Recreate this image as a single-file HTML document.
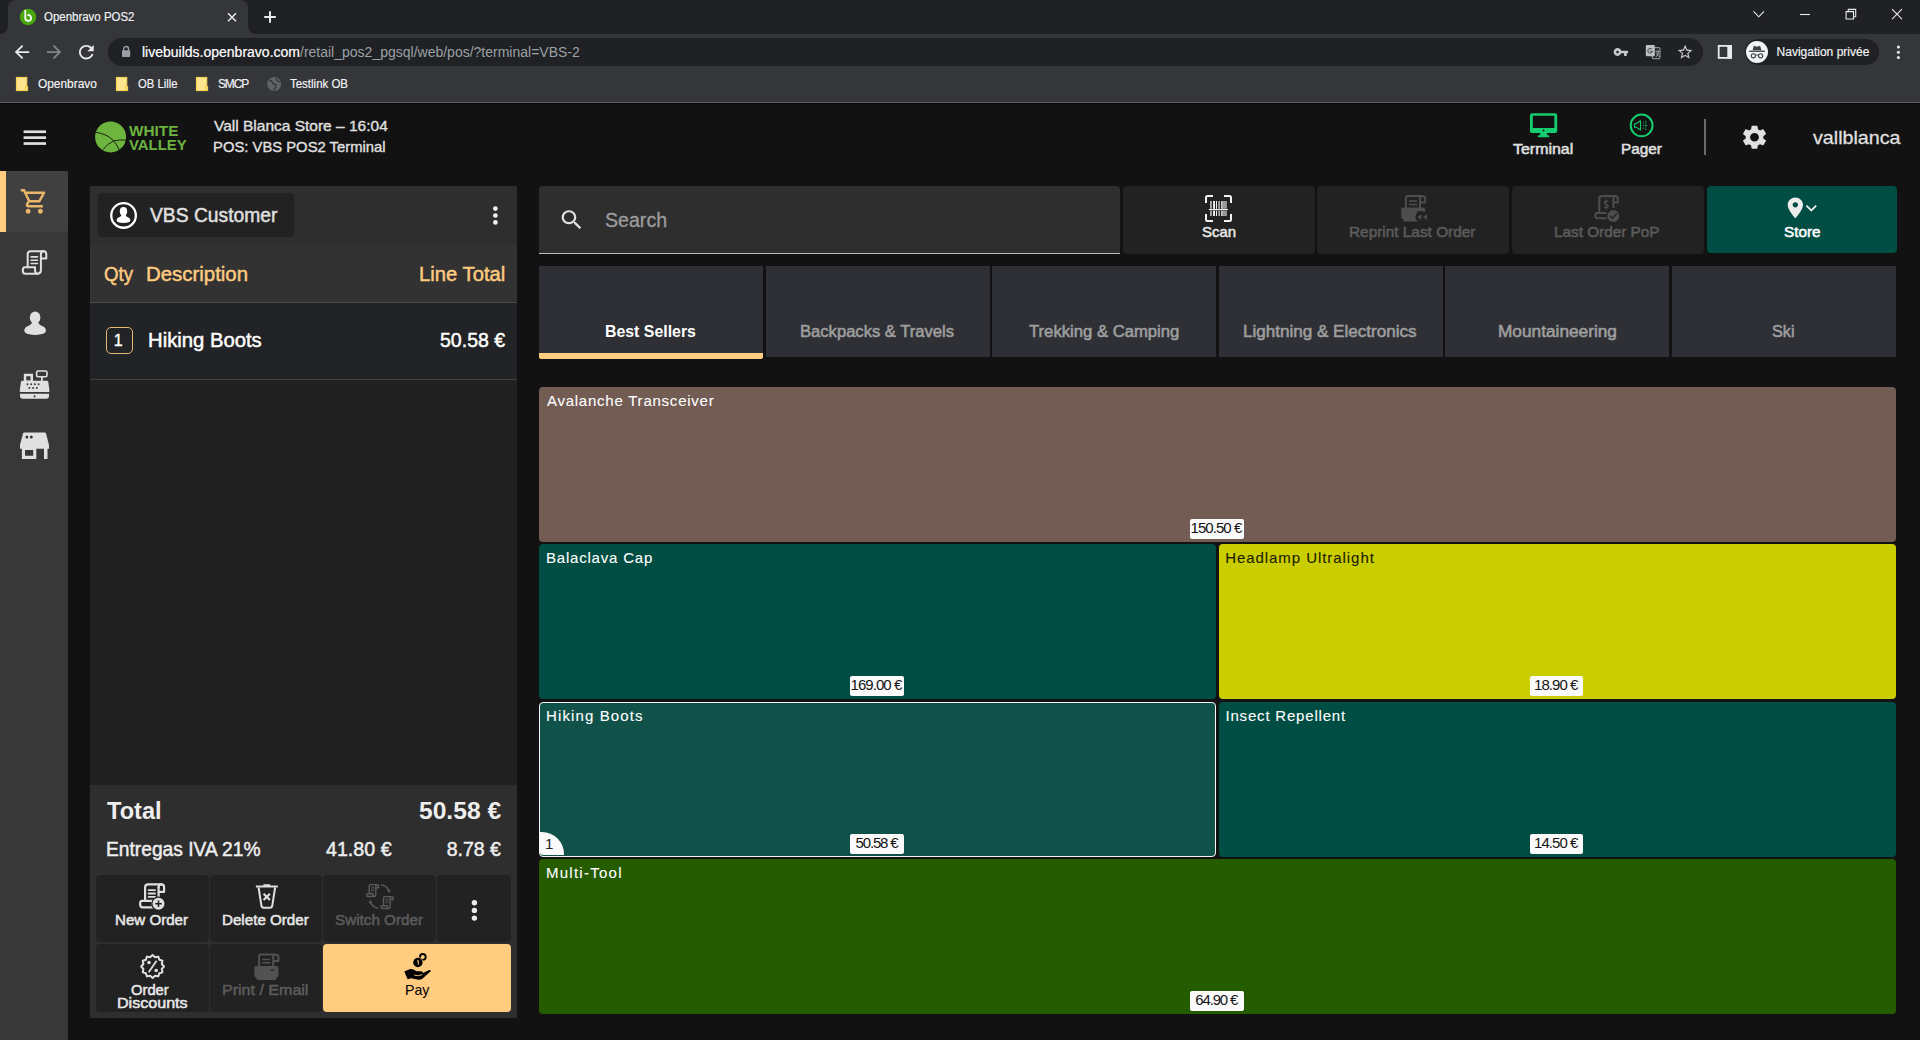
<!DOCTYPE html>
<html lang="en">
<head>
<meta charset="utf-8">
<title>Openbravo POS2</title>
<style>
*{box-sizing:border-box;margin:0;padding:0}
html,body{width:1920px;height:1040px;overflow:hidden;background:#121212;font-family:"Liberation Sans",sans-serif;color:#fff}
#root{position:relative;width:1920px;height:1040px;overflow:hidden;background:#121212}
.abs,#root>div,#root>span,#root>svg{position:absolute}
.t{white-space:nowrap;transform-origin:0 0;display:block}
svg{display:block;overflow:visible}
/* browser chrome */
#tabstrip{left:0;top:0;width:1920px;height:34px;background:#202124}
#tab{left:8px;top:0;width:240px;height:34px;background:#35363a;border-radius:8px 8px 0 0}
#toolbar{left:0;top:34px;width:1920px;height:34px;background:#35363a}
#omni{left:108px;top:38px;width:1595px;height:28px;border-radius:14px;background:#202124}
#incog{left:1745px;top:39px;width:134px;height:26px;border-radius:13px;background:#202124}
#incogav{left:1746px;top:41px;width:22px;height:22px;border-radius:11px;background:#f1f3f4}
#bookmarks{left:0;top:68px;width:1920px;height:34px;background:#35363a}
#chromeline{left:0;top:102px;width:1920px;height:1px;background:#5e5f62;box-shadow:0 1px 0 #0c0c0c}
/* app */
#sidebar{left:0;top:171px;width:68px;height:869px;background:#383838}
#sideactive{left:0;top:171px;width:68px;height:61px;background:#404040;border-radius:0 4px 4px 0}
#sidebarmark{left:0;top:171px;width:6px;height:61px;background:#ffcc80}
#hsep{left:1704px;top:119px;width:2px;height:36px;background:#6a6a6a}
#ticket{left:90px;top:186px;width:427px;height:832px;background:#212121}
#tickethead{left:90px;top:186px;width:427px;height:59px;background:#2e2e2e}
#custbtn{left:98px;top:193px;width:196px;height:44px;background:#222222;border-radius:4px}
#colhead{left:90px;top:245px;width:427px;height:58px;background:#323232;border-bottom:1px solid #4a4a4a}
#line1{left:90px;top:303px;width:427px;height:77px;background:#222326;border-bottom:1px solid #424242}
#qtybox{left:106px;top:327px;width:27px;height:27px;border:1px solid #e6b873;border-radius:5px}
#totals{left:90px;top:785px;width:427px;height:233px;background:#2e2e2e}
.btn{background:#222222;border-radius:4px}
#pay{left:323.25px;top:944.25px;width:187.75px;height:67.5px;background:#ffcc80;border-radius:4px}
/* right */
#search{left:539px;top:186px;width:581px;height:68px;background:#2e2e2e;border-radius:4px 4px 0 0;border-bottom:1px solid #bdbdbd}
#store{left:1706.700px;top:186.400px;width:190.700px;height:67px;background:#004d43;border-radius:4px}
.cat{top:266px;width:224px;height:91px;background:#2f3036}
#cat0{height:87px}
#catbar{left:539px;top:353px;width:224px;height:6px;background:#ffcc80;border-radius:0 0 2px 2px}
.prod{border-radius:4px}
.price{width:54px;height:20px;background:#fafafa;border-radius:2px}
#qtybadge{left:540px;top:832px;width:24px;height:23px;background:#fafafa;border-radius:0 22px 0 3px}
</style>
</head>
<body>
<div id="root">
<!-- browser chrome -->
<div id="tabstrip"></div>
<div id="tab"></div>
<div id="toolbar"></div>
<div id="omni"></div>
<div id="incog"></div>
<div id="incogav"></div>
<div id="bookmarks"></div>
<div id="chromeline"></div>
<!-- app shell -->
<div id="sidebar"></div>
<div id="sideactive"></div>
<div id="sidebarmark"></div>
<div id="hsep"></div>
<!-- ticket -->
<div id="ticket"></div>
<div id="tickethead"></div>
<div id="custbtn"></div>
<div id="colhead"></div>
<div id="line1"></div>
<div id="qtybox"></div>
<div id="totals"></div>
<div class="btn" style="left:96.25px;top:874.5px;width:112.5px;height:67.5px"></div>
<div class="btn" style="left:210px;top:874.5px;width:112px;height:67.5px"></div>
<div class="btn" style="left:323.25px;top:874.5px;width:112.5px;height:67.5px"></div>
<div class="btn" style="left:437px;top:874.5px;width:74px;height:67.5px"></div>
<div class="btn" style="left:96.25px;top:944.25px;width:112.5px;height:67.5px"></div>
<div class="btn" style="left:210px;top:944.25px;width:112px;height:67.5px"></div>
<div id="pay"></div>
<!-- right: search + actions -->
<div id="search"></div>
<div class="btn" style="left:1123px;top:186px;width:192px;height:68px"></div>
<div class="btn" style="left:1317px;top:186px;width:192px;height:68px"></div>
<div class="btn" style="left:1512px;top:186px;width:192px;height:68px"></div>
<div id="store"></div>
<!-- categories -->
<div class="cat" id="cat0" style="left:539px"></div>
<div class="cat" style="left:766px"></div>
<div class="cat" style="left:992.3px"></div>
<div class="cat" style="left:1218.8px"></div>
<div class="cat" style="left:1445.4px"></div>
<div class="cat" style="left:1672px"></div>
<div id="catbar"></div>
<!-- products -->
<div class="prod" style="left:539px;top:387px;width:1357px;height:155px;background:#735c54"></div>
<div class="prod" style="left:539px;top:544px;width:677px;height:155px;background:#004d43"></div>
<div class="prod" style="left:1219px;top:544px;width:677px;height:155px;background:#cacd00"></div>
<div class="prod" style="left:539px;top:702px;width:677px;height:155px;background:#10524a;border:1px solid #f5f5f5"></div>
<div class="prod" style="left:1219px;top:702px;width:677px;height:155px;background:#004d43"></div>
<div class="prod" style="left:539px;top:859px;width:1357px;height:155px;background:#265c00"></div>
<div class="price" style="left:1190px;top:519px"></div>
<div class="price" style="left:850px;top:676px"></div>
<div class="price" style="left:1530px;top:676px;width:53px"></div>
<div class="price" style="left:850px;top:834px"></div>
<div class="price" style="left:1530px;top:834px;width:53px"></div>
<div class="price" style="left:1190px;top:991px"></div>
<div id="qtybadge"></div>

<!-- icons -->
<svg class="abs" style="left:0;top:0" width="1920" height="1040" viewBox="0 0 1920 1040">
<path d="M0 34 A8 8 0 0 0 8 26 V34Z M248 26 A8 8 0 0 0 256 34 H248Z" fill="#35363a"/>
<circle cx="28" cy="17" r="8.2" fill="#46a80c"/>
<path d="M25.3 10.6 V17.9 A2.9 2.9 0 1 0 28.2 15" fill="none" stroke="#fff" stroke-width="1.8" stroke-linecap="round"/>
<path d="M228 13.2 L236 21.2 M236 13.2 L228 21.2" stroke="#e8eaed" stroke-width="1.5" fill="none"/>
<path d="M264.2 17 H275.8 M270 11.2 V22.8" stroke="#e8eaed" stroke-width="2" fill="none"/>
<g transform="translate(11.200 41.500) scale(0.9000 0.8750)" fill="#e8eaed" ><path d="M20 11H7.83l5.59-5.59L12 4l-8 8 8 8 1.41-1.41L7.83 13H20v-2z"/></g>
<g transform="translate(43.438 41.500) scale(0.8906 0.8750)" fill="#84868a" ><path d="M12 4l-1.41 1.41L16.17 11H4v2h12.17l-5.58 5.59L12 20l8-8z"/></g>
<g transform="translate(75.325 41.400) scale(0.9188 0.9000)" fill="#e8eaed" ><path d="M17.65 6.35C16.2 4.9 14.21 4 12 4c-4.42 0-7.99 3.58-7.99 8s3.57 8 7.99 8c3.73 0 6.84-2.55 7.73-6h-2.08c-.82 2.33-3.04 4-5.65 4-3.31 0-6-2.69-6-6s2.690-6 6-6c1.660 0 3.140.69 4.220 1.78L13 11h7V4l-2.350 2.350z"/></g>
<rect x="122" y="50.3" width="8.2" height="6.8" rx="0.8" fill="#9aa0a6"/>
<path d="M123.7 50.6 V48.9 A2.4 2.4 0 0 1 128.5 48.9 V50.6" fill="none" stroke="#9aa0a6" stroke-width="1.4"/>
<g transform="translate(1612.945 44.200) scale(0.6545 0.6500)" fill="#c7c9cc" ><path d="M12.65 10C11.83 7.67 9.61 6 7 6c-3.31 0-6 2.69-6 6s2.69 6 6 6c2.61 0 4.83-1.67 5.65-4H17v4h4v-4h2v-4H12.65zM7 14c-1.1 0-2-.9-2-2s.9-2 2-2 2 .9 2 2-.9 2-2 2z"/></g>
<rect x="1652.300" y="47.700" width="7.700" height="11" rx="0.800" fill="#26272b" stroke="#b4b7bb" stroke-width="0.900"/>
<rect x="1645.800" y="44.900" width="9" height="11.300" rx="1" fill="#bdc1c6"/>
<path d="M1651.900 49.300 A2.300 2.300 0 1 0 1652.400 51.300 H1650.300" stroke="#2b2c2f" stroke-width="0.900" fill="none"/>
<path d="M1655.500 51.300 h3.800 M1657.400 50.400 v0.900 M1655.800 57 q2.400 -1.800 2.900 -5.500 M1656.300 52.600 q1 2.700 3 4.200" stroke="#c7c9cc" stroke-width="0.800" fill="none"/>
<g transform="translate(1676.330 43.216) scale(0.7350 0.7421)" fill="#c7c9cc" ><path d="M22 9.24l-7.19-.62L12 2 9.19 8.63 2 9.24l5.46 4.73L5.82 21 12 17.27 18.18 21l-1.63-7.03L22 9.24zM12 15.4l-3.76 2.27 1-4.28-3.32-2.88 4.38-.38L12 6.1l1.71 4.04 4.38.38-3.32 2.88 1 4.28L12 15.4z"/></g>
<rect x="1718.7" y="45.9" width="12.4" height="12" fill="none" stroke="#e8eaed" stroke-width="1.8"/>
<rect x="1727.300" y="45.500" width="4.700" height="13" fill="#e8eaed"/>
<path d="M1752.6 50.3 L1753.7 46.3 Q1753.9 45.6 1754.6 45.9 L1757 46.8 L1759.4 45.9 Q1760.1 45.6 1760.3 46.3 L1761.4 50.3Z" fill="#3c4043"/>
<rect x="1749.2" y="50.6" width="15.6" height="1.3" fill="#3c4043"/>
<circle cx="1753.4" cy="55.8" r="2.1" fill="none" stroke="#3c4043" stroke-width="1.1"/><circle cx="1760.6" cy="55.8" r="2.1" fill="none" stroke="#3c4043" stroke-width="1.1"/><path d="M1755.5 55.3 q1.5 -0.9 3 0" stroke="#3c4043" stroke-width="1" fill="none"/>
<circle cx="1898.4" cy="47" r="1.55" fill="#e8eaed"/>
<circle cx="1898.4" cy="52.2" r="1.55" fill="#e8eaed"/>
<circle cx="1898.4" cy="57.5" r="1.55" fill="#e8eaed"/>
<path d="M1753.5 11.3 L1758.8 16.8 L1764 11.3" stroke="#e8eaed" stroke-width="1.1" fill="none"/>
<path d="M1800 14.5 H1810" stroke="#e8eaed" stroke-width="1.1"/>
<path d="M1846.1 11.6 h7.4 v7.4 h-7.4z M1848.3 11.4 v-2 h7.4 v7.4 h-2" stroke="#e8eaed" stroke-width="1.1" fill="none"/>
<path d="M1892 9.2 L1902 19.2 M1902 9.2 L1892 19.2" stroke="#e8eaed" stroke-width="1.1" fill="none"/>
<rect x="16.4" y="77.400" width="10.400" height="13.200" fill="#ffe68e" stroke="#fdd850" stroke-width="1"/>
<rect x="25.299999999999997" y="86.500" width="2.400" height="4.100" fill="#ffe68e" stroke="#f3cc48" stroke-width="0.900"/>
<rect x="116.4" y="77.400" width="10.400" height="13.200" fill="#ffe68e" stroke="#fdd850" stroke-width="1"/>
<rect x="125.30000000000001" y="86.500" width="2.400" height="4.100" fill="#ffe68e" stroke="#f3cc48" stroke-width="0.900"/>
<rect x="196.4" y="77.400" width="10.400" height="13.200" fill="#ffe68e" stroke="#fdd850" stroke-width="1"/>
<rect x="205.3" y="86.500" width="2.400" height="4.100" fill="#ffe68e" stroke="#f3cc48" stroke-width="0.900"/>
<circle cx="274.2" cy="84" r="7" fill="#5f6368"/>
<path d="M269.3 80 q2.5 0.5 3 2.5 t3.5 2 q1 1.5 -0.5 3 t-1 3 M277 78 q-1.5 2 0.5 3 t3 0.2" stroke="#35363a" stroke-width="1.3" fill="none"/>
<rect x="23.6" y="130.4" width="22.4" height="2.7" fill="#e0e0e0"/>
<rect x="23.6" y="136.3" width="22.4" height="2.7" fill="#e0e0e0"/>
<rect x="23.6" y="142.2" width="22.4" height="2.7" fill="#e0e0e0"/>
<circle cx="110.6" cy="136.9" r="15.5" fill="#6db53f"/>
<path d="M95.3 132.3 Q106 133.5 112.9 140 Q117.6 145 119.1 150 M102.8 149.6 Q107.5 143.8 113.4 141 Q118.5 139.6 126 140" stroke="#121212" stroke-width="0.9" fill="none"/>
<path fill-rule="evenodd" d="M1532 113.2 h23.2 a2 2 0 0 1 2 2 v15.7 a2 2 0 0 1 -2 2 h-23.2 a2 2 0 0 1 -2 -2 v-15.700 a2 2 0 0 1 2 -2z M1532.800 115.800 v12.200 h21.600 v-12.200z" fill="#14cd6e"/>
<path d="M1540.500 132.800 h6.200 l0.600 2.400 h1.200 q0.900 0 0.900 0.900 v0.400 q0 0.800 -0.900 0.800 h-9.800 q-0.900 0 -0.900 -0.800 v-0.400 q0 -0.900 0.900 -0.900 h1.200z" fill="#14cd6e"/>
<circle cx="1543.600" cy="130.500" r="0.900" fill="#121212"/>
<circle cx="1641.600" cy="125.400" r="10.900" fill="none" stroke="#14cd6e" stroke-width="2"/>
<path d="M1634.400 123.700 h1.800 l4.300 -2.900 v9.200 l-4.300 -2.900 h-1.800z" fill="none" stroke="#14cd6e" stroke-width="1.100" stroke-linejoin="round"/>
<path d="M1643 125.400 h1.200 M1645.400 125.400 h1.700 M1643 123 l0.900 -0.500 M1645 122 l1.300 -0.700 M1643 127.800 l0.900 0.500 M1645 128.900 l1.300 0.700 M1645.300 123.800 h0.900 M1645.300 127 h0.900" stroke="#14cd6e" stroke-width="1" fill="none"/>
<g transform="translate(1739.725 122.925) scale(1.2313 1.1979)" fill="#e0e0e0" ><path d="M19.14 12.94c.04-.3.06-.61.06-.94 0-.32-.02-.64-.07-.94l2.030-1.580c.18-.14.23-.41.12-.61l-1.920-3.320c-.12-.22-.37-.29-.59-.22l-2.390.96c-.5-.38-1.030-.7-1.620-.94l-.36-2.540c-.04-.24-.24-.41-.48-.41h-3.840c-.24 0-.43.17-.47.41l-.36 2.540c-.59.24-1.130.57-1.620.94l-2.390-.96c-.22-.08-.47 0-.59.22L2.740 8.870c-.12.21-.08.47.12.61l2.030 1.580c-.05.3-.09.63-.09.940s.02.64.07.94l-2.030 1.580c-.18.14-.23.41-.12.61l1.920 3.320c.12.22.37.29.59.22l2.390-.96c.5.38 1.030.7 1.620.94l.36 2.540c.05.24.24.41.48.41h3.840c.24 0 .44-.17.47-.41l.36-2.540c.59-.24 1.130-.56 1.620-.94l2.390.96c.22.08.47 0 .59-.22l1.920-3.320c.12-.22.07-.47-.12-.61l-2.010-1.580zM12 15.600c-1.980 0-3.600-1.620-3.600-3.600s1.620-3.600 3.600-3.600 3.600 1.620 3.600 3.600-1.620 3.600-3.600 3.600z"/></g>
<g transform="translate(19.576 186.530) scale(1.2239 1.2350)" fill="#ebb56b" ><path d="M15.55 13c.75 0 1.41-.41 1.750-1.030l3.580-6.490c.37-.66-.11-1.480-.87-1.480H5.210l-.94-2H1v2h2l3.600 7.590-1.350 2.440C4.520 15.370 5.480 17 7 17h12v-2H7l1.100-2h7.450zM6.160 6h12.150l-2.760 5H8.530L6.160 6zM7 18c-1.100 0-1.990.9-1.990 2S5.900 22 7 22s2-.9 2-2-.9-2-2-2zm10 0c-1.100 0-1.990.9-1.990 2s.89 2 1.990 2 2-.9 2-2-.9-2-2-2z"/></g>
<g transform="translate(21.8 250.2) scale(0.98)" fill="none" stroke="#e0e0e0" stroke-width="2.041" stroke-linejoin="round" stroke-linecap="round"><path d="M6 17 V4 Q6 1 9 1 H22.500 M19.500 4 V20.500 Q19.500 24 16 24"/><path d="M19.500 4 Q19.500 1 22.300 1 Q25 1 25 4 V8.500 H19.500"/><path d="M13.500 17.500 H3 Q1 17.500 1 20.700 Q1 24 3.500 24 H16 Q13.500 23.500 13.500 20.700 Z"/><path d="M9.500 6.800 H16 M9.500 10.200 H16 M9.500 13.600 H16" stroke-width="1.633"/></g>
<ellipse cx="35.100" cy="317.600" rx="5.300" ry="6.200" fill="#e0e0e0"/>
<path d="M32 321 Q32.500 324.600 27.500 326.300 Q24.300 327.600 24.300 330.800 Q24.300 334.900 35.100 334.900 Q45.900 334.900 45.900 330.800 Q45.900 327.600 42.700 326.300 Q37.700 324.600 38.200 321Z" fill="#e0e0e0"/>
<rect x="36.600" y="371" width="10.400" height="5.700" rx="1.500" fill="none" stroke="#e0e0e0" stroke-width="1.600"/>
<rect x="41" y="376.500" width="1.800" height="4.500" fill="#e0e0e0"/>
<path fill-rule="evenodd" d="M23.800 373.800 h9.200 v7.500 h-9.200z M26.300 376.300 v4.200 h4.200 v-4.200z" fill="#e0e0e0"/>
<path d="M22.300 380.700 h24.600 q1.200 0 1.400 1.200 l1.200 8.800 q0.100 1.200 -1.100 1.200 h-27.600 q-1.200 0 -1.100 -1.200 l1.200 -8.800 q0.200 -1.200 1.400 -1.200z" fill="#e0e0e0"/>
<circle cx="27.5" cy="384.3" r="0.950" fill="#383838"/>
<circle cx="31.2" cy="384.3" r="0.950" fill="#383838"/>
<circle cx="34.9" cy="384.3" r="0.950" fill="#383838"/>
<circle cx="38.6" cy="384.3" r="0.950" fill="#383838"/>
<circle cx="29.4" cy="388" r="0.950" fill="#383838"/>
<circle cx="33.1" cy="388" r="0.950" fill="#383838"/>
<circle cx="36.8" cy="388" r="0.950" fill="#383838"/>
<path d="M20 393.700 h29 v2.300 q0 2.800 -2.800 2.800 h-23.400 q-2.800 0 -2.800 -2.800z" fill="#e0e0e0"/>
<path d="M33.300 396.300 h2.400 M34.500 395.100 v2.400" stroke="#383838" stroke-width="0.800"/>
<path d="M24.300 432.500 h20.400 q1 0 1.300 1 l3 11.500 v3.800 h-29 v-3.800 l3 -11.500 q0.300 -1 1.300 -1z" fill="#e0e0e0"/>
<circle cx="26.900" cy="437.100" r="1.500" fill="#383838"/><circle cx="31.300" cy="437.100" r="1.500" fill="#383838"/>
<path fill-rule="evenodd" d="M21.900 448 h14.400 v11 h-14.400z M25 450 v5.700 h8.200 v-5.700z" fill="#e0e0e0"/>
<rect x="44" y="448" width="3.500" height="11" fill="#e0e0e0"/>
<circle cx="123.550" cy="215.450" r="12.300" fill="none" stroke="#fff" stroke-width="2.300"/>
<ellipse cx="123.500" cy="211.200" rx="3.700" ry="4.300" fill="#fff"/>
<path d="M121.300 213.500 Q121.800 216.400 119 217.300 Q116.600 218.200 116.600 220.300 Q116.600 223 123.500 223 Q130.400 223 130.400 220.300 Q130.400 218.200 128 217.300 Q125.200 216.400 125.700 213.500Z" fill="#fff"/>
<circle cx="495.400" cy="208.6" r="2.350" fill="#f0f0f0"/>
<circle cx="495.400" cy="215.5" r="2.350" fill="#f0f0f0"/>
<circle cx="495.400" cy="222.4" r="2.350" fill="#f0f0f0"/>
<circle cx="474.400" cy="902.7" r="2.700" fill="#ececec"/>
<circle cx="474.400" cy="910.4" r="2.700" fill="#ececec"/>
<circle cx="474.400" cy="918.1" r="2.700" fill="#ececec"/>
<g transform="translate(139.1 883.3) scale(1.0)" fill="none" stroke="#e0e0e0" stroke-width="2.200" stroke-linejoin="round" stroke-linecap="round"><path d="M6 17 V4 Q6 1 9 1 H22.500 M19.500 4 V20.500 Q19.500 24 16 24"/><path d="M19.500 4 Q19.500 1 22.300 1 Q25 1 25 4 V8.500 H19.500"/><path d="M13.500 17.500 H3 Q1 17.500 1 20.700 Q1 24 3.500 24 H16 Q13.500 23.500 13.500 20.700 Z"/><path d="M9.500 6.800 H16 M9.500 10.200 H16 M9.500 13.600 H16" stroke-width="1.760"/></g>
<circle cx="158.500" cy="903.800" r="7.200" fill="#222222"/>
<circle cx="158.500" cy="903.800" r="6" fill="#e0e0e0"/>
<path d="M155.200 903.800 h6.600 M158.500 900.500 v6.600" stroke="#222222" stroke-width="1.500"/>
<path d="M255.900 886.600 H277.800 M263.400 885.200 h6.800" stroke="#e0e0e0" stroke-width="2" fill="none"/>
<path d="M258.600 887.500 L261.400 905.700 Q261.700 907.700 263.700 907.700 H270 Q272 907.700 272.300 905.700 L275.100 887.500" stroke="#e0e0e0" stroke-width="2" fill="none"/>
<path d="M263.600 893.700 L269.900 900 M269.900 893.700 L263.600 900" stroke="#e0e0e0" stroke-width="2.200" fill="none"/>
<g transform="translate(366 884)" fill="none" stroke="#5a5a5a" stroke-width="1.400" stroke-linejoin="round"><path d="M3.200 9.500 V1.800 Q3.200 0.600 4.500 0.600 H11.500 M9.800 2 V10.800 Q9.800 12.500 8.300 12.500"/><path d="M9.800 2 Q9.800 0.600 11.300 0.600 Q12.600 0.600 12.600 2 V3.800 H9.800"/><path d="M7 9.700 H1.500 Q0.500 9.700 0.500 11.100 Q0.500 12.500 1.700 12.500 H8.300 Q7 12.300 7 11.100Z"/><path d="M5 3.200 h3.200 M5 5 h3.200 M5 6.800 h3.200" stroke-width="0.900"/></g>
<g transform="translate(380.4 896)" fill="none" stroke="#5a5a5a" stroke-width="1.400" stroke-linejoin="round"><path d="M3.200 9.500 V1.800 Q3.200 0.600 4.500 0.600 H11.500 M9.800 2 V10.800 Q9.800 12.500 8.300 12.500"/><path d="M9.800 2 Q9.800 0.600 11.300 0.600 Q12.600 0.600 12.600 2 V3.800 H9.800"/><path d="M7 9.700 H1.500 Q0.500 9.700 0.500 11.100 Q0.500 12.500 1.700 12.500 H8.300 Q7 12.300 7 11.100Z"/><path d="M5 3.200 h3.200 M5 5 h3.200 M5 6.800 h3.200" stroke-width="0.900"/></g>
<path d="M381 884.800 Q387.500 886 389 891.500" stroke="#5a5a5a" stroke-width="1.400" fill="none"/><path d="M386.900 890.200 L389.300 893 L390.700 889.500Z" fill="#5a5a5a"/>
<path d="M378.300 908.200 Q372 907 370.300 901.800" stroke="#5a5a5a" stroke-width="1.400" fill="none"/><path d="M368.600 903.500 L370 900 L372.500 902.800Z" fill="#5a5a5a"/>
<path d="M152.60 955.10 L155.06 957.32 L158.30 956.63 L159.32 959.78 L162.47 960.80 L161.78 964.04 L164.00 966.50 L161.78 968.96 L162.47 972.20 L159.32 973.22 L158.30 976.37 L155.06 975.68 L152.60 977.90 L150.14 975.68 L146.90 976.37 L145.88 973.22 L142.73 972.20 L143.42 968.96 L141.20 966.50 L143.42 964.04 L142.73 960.80 L145.88 959.78 L146.90 956.63 L150.14 957.32Z" fill="none" stroke="#e0e0e0" stroke-width="2" stroke-linejoin="round"/>
<path d="M148.700 972.300 L156.600 960.700" stroke="#e0e0e0" stroke-width="1.800"/><circle cx="149" cy="962.500" r="1.800" fill="#e0e0e0"/><circle cx="156.200" cy="970.500" r="1.800" fill="#e0e0e0"/>
<g transform="translate(254.4 953.5)"><path d="M4.700 13 V3 Q4.700 1 6.700 1 H21.500 M18.800 3.500 V13 M18.800 3.500 Q18.800 1 21.400 1 Q24 1 24 3.500 V7.500 H18.800" fill="none" stroke="#525252" stroke-width="2" stroke-linejoin="round"/><path d="M7.800 6 H15.800 M7.800 9.300 H15.800" stroke="#525252" stroke-width="1.500"/><rect x="0" y="12.500" width="24" height="11.500" rx="2" fill="#525252"/><rect x="2.200" y="23" width="19.600" height="3.400" rx="1" fill="#525252"/><rect x="16" y="16" width="4" height="1.300" rx="0.600" fill="#222222"/></g>
<circle cx="422.800" cy="956.900" r="2.900" fill="none" stroke="#000" stroke-width="1.800"/>
<circle cx="417.900" cy="962.500" r="5.400" fill="#ffcc80"/>
<circle cx="417.900" cy="962.500" r="4.700" fill="#000"/>
<path d="M417 961.300 L418.300 960.500 V964.600" stroke="#ffcc80" stroke-width="1" fill="none"/>
<path d="M404.300 971.400 L410.200 969.100 Q412 968.800 413.500 969.600 L416.500 971.200 H421.300 Q423 971.300 423 972.900 L428.600 970.200 Q430.200 969.500 430.900 970.900 L423 978.200 Q421 979.800 418.500 979.700 L411 978.200 L407.600 979.200 Z" fill="#000"/>
<path d="M414.200 975.100 Q418.300 976.500 422.400 974.600" fill="none" stroke="#ffcc80" stroke-width="0.900"/>
<g transform="translate(558.338 206.975) scale(1.1206 1.0749)" fill="#e0e0e0" ><path d="M15.5 14h-.79l-.28-.27C15.410 12.590 16 11.110 16 9.500 16 5.910 13.090 3 9.500 3S3 5.910 3 9.500 5.910 16 9.500 16c1.610 0 3.090-.59 4.230-1.570l.27.28v.79l5 4.990L20.490 19l-4.990-5zm-6 0C7.010 14 5 11.990 5 9.500S7.010 5 9.500 5 14 7.010 14 9.500 11.990 14 9.500 14z"/></g>
<path d="M1206 203 V197.500 Q1206 196 1207.500 196 H1213 M1224 196 H1229.500 Q1231 196 1231 197.500 V203 M1231 214 V219.500 Q1231 221 1229.500 221 H1224 M1213 221 H1207.500 Q1206 221 1206 219.500 V214" fill="none" stroke="#f2f2f2" stroke-width="2"/>
<rect x="1210" y="201" width="1.9" height="7.800" fill="#a8a8a8"/><rect x="1210" y="210.600" width="1.9" height="5.400" fill="#a8a8a8"/>
<rect x="1213.1" y="201" width="1.9" height="7.800" fill="#f2f2f2"/><rect x="1213.1" y="210.600" width="1.9" height="5.400" fill="#f2f2f2"/>
<rect x="1216" y="201" width="1" height="7.800" fill="#f2f2f2"/><rect x="1216" y="210.600" width="1" height="5.400" fill="#f2f2f2"/>
<rect x="1218.3" y="201" width="1.7" height="7.800" fill="#a8a8a8"/><rect x="1218.3" y="210.600" width="1.7" height="5.400" fill="#a8a8a8"/>
<rect x="1221.2" y="201" width="1.5" height="7.800" fill="#f2f2f2"/><rect x="1221.2" y="210.600" width="1.5" height="5.400" fill="#f2f2f2"/>
<rect x="1222.7" y="201" width="4.2" height="7.800" fill="#9a9a9a"/><rect x="1222.7" y="210.600" width="4.2" height="5.400" fill="#9a9a9a"/>
<rect x="1208.800" y="209" width="19.200" height="1.100" fill="#f2f2f2"/>
<g transform="translate(1401.2 195.1)"><path d="M4.700 13 V3 Q4.700 1 6.700 1 H21.500 M18.800 3.500 V13 M18.800 3.500 Q18.800 1 21.400 1 Q24 1 24 3.500 V7.500 H18.800" fill="none" stroke="#4d4d4d" stroke-width="2" stroke-linejoin="round"/><path d="M7.800 6 H15.800 M7.800 9.300 H15.800" stroke="#4d4d4d" stroke-width="1.500"/><rect x="0" y="12.500" width="24" height="11.500" rx="2" fill="#4d4d4d"/><rect x="2.200" y="23" width="19.600" height="3.400" rx="1" fill="#4d4d4d"/><rect x="16" y="16" width="4" height="1.300" rx="0.600" fill="#222222"/></g>
<circle cx="1421.200" cy="216.700" r="5.800" fill="#222222"/>
<path d="M1421.300 214.200 V219.900 L1417.400 217.050Z M1426.900 214.200 V219.900 L1423 217.050Z" fill="#4d4d4d"/>
<g fill="none" stroke="#4d4d4d" stroke-width="2.100" stroke-linejoin="round"><path d="M1599.300 212 V198.500 Q1599.300 196.100 1601.700 196.100 H1616 M1613.400 198.500 V208"/><path d="M1613.400 198.500 Q1613.400 196.100 1615.600 196.100 Q1617.700 196.100 1617.700 198.500 V202.500 H1613.400"/><path d="M1607 213 H1597 Q1595.300 213 1595.300 215.600 Q1595.300 218.300 1597.300 218.300 H1607"/></g>
<path d="M1608.300 201.800 Q1606.300 200.300 1604.800 201.400 Q1603.500 202.700 1605.300 203.900 L1607.200 204.900 Q1609 206.200 1607.600 207.500 Q1606 208.600 1604 207 M1606.200 199.500 V209.500" fill="none" stroke="#4d4d4d" stroke-width="1.200"/>
<circle cx="1613.300" cy="215.900" r="7.200" fill="#222222"/><circle cx="1613.300" cy="215.900" r="6" fill="#4d4d4d"/>
<path d="M1610.200 216 L1612.400 218.200 L1616.800 213.600" fill="none" stroke="#222222" stroke-width="1.400"/>
<g transform="translate(1782.236 195.420) scale(1.0929 1.0400)" fill="#ececec" ><path d="M12 2C8.130 2 5 5.130 5 9c0 5.250 7 13 7 13s7-7.750 7-13c0-3.870-3.130-7-7-7zm0 9.500c-1.380 0-2.500-1.120-2.500-2.500s1.120-2.500 2.500-2.500 2.500 1.120 2.500 2.500-1.120 2.500-2.500 2.500z"/></g>
<path d="M1806.400 205.600 L1811.300 210.500 L1816.200 205.600" fill="none" stroke="#ececec" stroke-width="1.800"/>
</svg>

<!-- text -->
<span class="t abs" style="left:44.20px;top:10.84px;font-size:12px;line-height:12px;color:#f1f3f4;-webkit-text-stroke:0.17px;transform:scaleX(0.9553);">Openbravo POS2</span>
<span class="t abs" style="left:142.00px;top:45.15px;font-size:14px;line-height:14px;color:#ffffff;-webkit-text-stroke:0.20px;">livebuilds.openbravo.com</span>
<span class="t abs" style="left:300.00px;top:45.15px;font-size:14px;line-height:14px;color:#9aa0a6;">/retail_pos2_pgsql/web/pos/?terminal=VBS-2</span>
<span class="t abs" style="left:38.00px;top:77.84px;font-size:12px;line-height:12px;color:#f1f3f4;-webkit-text-stroke:0.17px;transform:scaleX(0.9916);">Openbravo</span>
<span class="t abs" style="left:138.00px;top:77.84px;font-size:12px;line-height:12px;color:#f1f3f4;-webkit-text-stroke:0.17px;transform:scaleX(0.9399);">OB Lille</span>
<span class="t abs" style="left:218.00px;top:77.84px;font-size:12px;line-height:12px;color:#f1f3f4;-webkit-text-stroke:0.17px;letter-spacing:-1.155px;">SMCP</span>
<span class="t abs" style="left:290.30px;top:77.84px;font-size:12px;line-height:12px;color:#f1f3f4;-webkit-text-stroke:0.17px;transform:scaleX(0.9558);">Testlink OB</span>
<span class="t abs" style="left:1776.60px;top:45.84px;font-size:12px;line-height:12px;color:#f1f3f4;-webkit-text-stroke:0.17px;">Navigation privée</span>
<span class="t abs" style="left:213.50px;top:117.90px;font-size:15px;line-height:15px;color:#e0e0e0;-webkit-text-stroke:0.34px;transform:scaleX(1.0332);">Vall Blanca Store – 16:04</span>
<span class="t abs" style="left:212.51px;top:138.80px;font-size:15px;line-height:15px;color:#e0e0e0;-webkit-text-stroke:0.34px;transform:scaleX(0.9872);">POS: VBS POS2 Terminal</span>
<span class="t abs" style="left:128.90px;top:123.00px;font-size:15px;line-height:15px;color:#6db33f;font-weight:700;transform:scaleX(1.0223);">WHITE</span>
<span class="t abs" style="left:129.20px;top:136.80px;font-size:15px;line-height:15px;color:#6db33f;font-weight:700;transform:scaleX(0.9922);">VALLEY</span>
<span class="t abs" style="left:1513.00px;top:141.05px;font-size:15px;line-height:15px;color:#e0e0e0;-webkit-text-stroke:0.51px;transform:scaleX(1.0630);">Terminal</span>
<span class="t abs" style="left:1620.68px;top:141.05px;font-size:15px;line-height:15px;color:#e0e0e0;-webkit-text-stroke:0.51px;transform:scaleX(1.0222);">Pager</span>
<span class="t abs" style="left:1813.00px;top:127.62px;font-size:19px;line-height:19px;color:#e0e0e0;-webkit-text-stroke:0.27px;transform:scaleX(1.0361);">vallblanca</span>
<span class="t abs" style="left:150.30px;top:205.47px;font-size:20px;line-height:20px;color:#e0e0e0;-webkit-text-stroke:0.46px;transform:scaleX(0.9630);">VBS Customer</span>
<span class="t abs" style="left:104.00px;top:263.87px;font-size:20px;line-height:20px;color:#ffcc80;-webkit-text-stroke:0.46px;transform:scaleX(0.9321);">Qty</span>
<span class="t abs" style="left:146.28px;top:263.87px;font-size:20px;line-height:20px;color:#ffcc80;-webkit-text-stroke:0.46px;transform:scaleX(1.0203);">Description</span>
<span class="t abs" style="left:418.59px;top:263.87px;font-size:20px;line-height:20px;color:#ffcc80;-webkit-text-stroke:0.46px;transform:scaleX(1.0122);">Line Total</span>
<span class="t abs" style="left:113.85px;top:333.06px;font-size:16px;line-height:16px;color:#fff;-webkit-text-stroke:0.37px;">1</span>
<span class="t abs" style="left:147.69px;top:330.37px;font-size:20px;line-height:20px;color:#fff;-webkit-text-stroke:0.46px;transform:scaleX(1.0128);">Hiking Boots</span>
<span class="t abs" style="left:439.70px;top:330.37px;font-size:20px;line-height:20px;color:#fff;-webkit-text-stroke:0.46px;transform:scaleX(0.9774);">50.58 €</span>
<span class="t abs" style="left:107.00px;top:798.68px;font-size:24px;line-height:24px;color:#eee;font-weight:700;transform:scaleX(0.9837);">Total</span>
<span class="t abs" style="left:418.75px;top:798.68px;font-size:24px;line-height:24px;color:#eee;font-weight:700;transform:scaleX(1.0254);">50.58 €</span>
<span class="t abs" style="left:106.01px;top:839.74px;font-size:19.5px;line-height:19.5px;color:#eee;-webkit-text-stroke:0.45px;transform:scaleX(0.9853);">Entregas IVA 21%</span>
<span class="t abs" style="left:325.50px;top:839.74px;font-size:19.5px;line-height:19.5px;color:#eee;-webkit-text-stroke:0.45px;transform:scaleX(1.0082);">41.80 €</span>
<span class="t abs" style="left:446.75px;top:839.74px;font-size:19.5px;line-height:19.5px;color:#eee;-webkit-text-stroke:0.45px;">8.78 €</span>
<span class="t abs" style="left:114.99px;top:912.30px;font-size:15px;line-height:15px;color:#e8e8e8;-webkit-text-stroke:0.51px;transform:scaleX(1.0067);">New Order</span>
<span class="t abs" style="left:221.99px;top:912.30px;font-size:15px;line-height:15px;color:#e8e8e8;-webkit-text-stroke:0.51px;transform:scaleX(1.0103);">Delete Order</span>
<span class="t abs" style="left:335.00px;top:912.30px;font-size:15px;line-height:15px;color:#5c5c5c;-webkit-text-stroke:0.51px;transform:scaleX(1.0151);">Switch Order</span>
<span class="t abs" style="left:131.00px;top:982.30px;font-size:15px;line-height:15px;color:#e8e8e8;-webkit-text-stroke:0.51px;transform:scaleX(0.9844);">Order</span>
<span class="t abs" style="left:116.93px;top:995.30px;font-size:15px;line-height:15px;color:#e8e8e8;-webkit-text-stroke:0.51px;transform:scaleX(1.0721);">Discounts</span>
<span class="t abs" style="left:221.93px;top:982.30px;font-size:15px;line-height:15px;color:#5c5c5c;-webkit-text-stroke:0.51px;transform:scaleX(1.0689);">Print / Email</span>
<span class="t abs" style="left:404.55px;top:982.30px;font-size:15px;line-height:15px;color:#000;transform:scaleX(0.9469);">Pay</span>
<span class="t abs" style="left:605.00px;top:210.07px;font-size:20px;line-height:20px;color:#9e9e9e;-webkit-text-stroke:0.28px;transform:scaleX(0.9800);">Search</span>
<span class="t abs" style="left:1201.70px;top:224.00px;font-size:15px;line-height:15px;color:#e8e8e8;-webkit-text-stroke:0.51px;transform:scaleX(0.9957);">Scan</span>
<span class="t abs" style="left:1349.18px;top:224.00px;font-size:15px;line-height:15px;color:#5c5c5c;-webkit-text-stroke:0.51px;transform:scaleX(1.0246);">Reprint Last Order</span>
<span class="t abs" style="left:1554.28px;top:224.20px;font-size:15px;line-height:15px;color:#5c5c5c;-webkit-text-stroke:0.51px;transform:scaleX(1.0198);">Last Order PoP</span>
<span class="t abs" style="left:1783.70px;top:224.20px;font-size:15px;line-height:15px;color:#fff;-webkit-text-stroke:0.51px;transform:scaleX(1.0223);">Store</span>
<span class="t abs" style="left:605.01px;top:323.76px;font-size:16px;line-height:16px;color:#fff;font-weight:700;transform:scaleX(0.9922);">Best Sellers</span>
<span class="t abs" style="left:799.66px;top:323.76px;font-size:16px;line-height:16px;color:#9e9e9e;-webkit-text-stroke:0.54px;transform:scaleX(1.0373);">Backpacks &amp; Travels</span>
<span class="t abs" style="left:1029.30px;top:323.76px;font-size:16px;line-height:16px;color:#9e9e9e;-webkit-text-stroke:0.54px;transform:scaleX(1.0415);">Trekking &amp; Camping</span>
<span class="t abs" style="left:1243.13px;top:323.76px;font-size:16px;line-height:16px;color:#9e9e9e;-webkit-text-stroke:0.54px;transform:scaleX(1.0664);">Lightning &amp; Electronics</span>
<span class="t abs" style="left:1497.52px;top:323.76px;font-size:16px;line-height:16px;color:#9e9e9e;-webkit-text-stroke:0.54px;transform:scaleX(1.0784);">Mountaineering</span>
<span class="t abs" style="left:1772.40px;top:323.76px;font-size:16px;line-height:16px;color:#9e9e9e;-webkit-text-stroke:0.54px;transform:scaleX(1.0151);">Ski</span>
<span class="t abs" style="left:546.90px;top:393.30px;font-size:15px;line-height:15px;color:#fff;-webkit-text-stroke:0.10px;letter-spacing:0.768px;">Avalanche Transceiver</span>
<span class="t abs" style="left:546.00px;top:550.30px;font-size:15px;line-height:15px;color:#fff;-webkit-text-stroke:0.10px;letter-spacing:0.793px;">Balaclava Cap</span>
<span class="t abs" style="left:1225.20px;top:550.30px;font-size:15px;line-height:15px;color:#1c1c00;-webkit-text-stroke:0.10px;letter-spacing:0.941px;">Headlamp Ultralight</span>
<span class="t abs" style="left:546.00px;top:708.30px;font-size:15px;line-height:15px;color:#fff;-webkit-text-stroke:0.10px;letter-spacing:1.127px;">Hiking Boots</span>
<span class="t abs" style="left:1225.50px;top:708.30px;font-size:15px;line-height:15px;color:#fff;-webkit-text-stroke:0.10px;letter-spacing:0.807px;">Insect Repellent</span>
<span class="t abs" style="left:545.90px;top:865.30px;font-size:15px;line-height:15px;color:#fff;-webkit-text-stroke:0.10px;letter-spacing:1.278px;">Multi-Tool</span>
<span class="t abs" style="left:1190.50px;top:520.10px;font-size:15px;line-height:15px;color:#151515;letter-spacing:-0.935px;">150.50 €</span>
<span class="t abs" style="left:850.50px;top:677.10px;font-size:15px;line-height:15px;color:#151515;letter-spacing:-0.935px;">169.00 €</span>
<span class="t abs" style="left:1534.00px;top:677.10px;font-size:15px;line-height:15px;color:#151515;letter-spacing:-0.951px;">18.90 €</span>
<span class="t abs" style="left:855.60px;top:835.10px;font-size:15px;line-height:15px;color:#151515;letter-spacing:-1.167px;">50.58 €</span>
<span class="t abs" style="left:1534.00px;top:835.10px;font-size:15px;line-height:15px;color:#151515;letter-spacing:-0.951px;">14.50 €</span>
<span class="t abs" style="left:1195.30px;top:992.10px;font-size:15px;line-height:15px;color:#151515;letter-spacing:-1.167px;">64.90 €</span>
<span class="t abs" style="left:544.90px;top:836.05px;font-size:15px;line-height:15px;color:#222;">1</span>
</div>
</body>
</html>
